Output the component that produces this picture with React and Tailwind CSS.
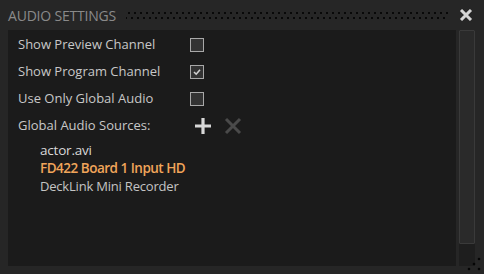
import React from "react";

function Dots() {
  return (
    <div
      className="flex-1 h-[13px] ml-[10px] mr-[10px] mt-[1px]"
      style={{
        backgroundImage:
          "radial-gradient(circle, #080808 1.1px, transparent 1.3px), radial-gradient(circle, #080808 1.1px, transparent 1.3px)",
        backgroundSize: "6px 10px, 6px 10px",
        backgroundPosition: "0px -1px, 3px 4px",
      }}
    />
  );
}

function Check({ checked }) {
  return (
    <div className="w-[14px] h-[14px] border border-[#a8a8a8] bg-[#333] flex items-center justify-center">
      {checked && (
        <svg width="10" height="10" viewBox="0 0 10 10">
          <path d="M2 5 L4.2 7.2 L8 2.8" stroke="#d0d0d0" strokeWidth="1.6" fill="none" />
        </svg>
      )}
    </div>
  );
}

function Row({ label, checked }) {
  return (
    <div className="flex items-center h-[27px]">
      <span className="w-[172px]">{label}</span>
      <Check checked={checked} />
    </div>
  );
}

export default function App() {
  return (
    <div
      className="relative w-[484px] h-[274px] bg-[#262626] flex flex-col text-[13px]"
      style={{ fontFamily: '"Open Sans", "Noto Sans", sans-serif' }}
    >
      <div className="h-[30px] flex items-center pl-[8px] pr-[11px]">
        <span className="text-[#8a8a8a] text-[14px] tracking-[-0.2px]">AUDIO SETTINGS</span>
        <Dots />
        <svg width="14" height="12" viewBox="0 0 14 12">
          <path d="M2 1 L12 11 M12 1 L2 11" stroke="#d4d4d4" strokeWidth="3" />
        </svg>
      </div>
      <div className="flex-1 flex pl-[8px] pr-[9px] pb-[8px] gap-[3px]">
        <div className="flex-1 bg-[#1b1b1b] pl-[10px] pt-[1px] text-[#c8c8c8]">
          <Row label="Show Preview Channel" />
          <Row label="Show Program Channel" checked />
          <Row label="Use Only Global Audio" />
          <div className="flex items-center h-[27px]">
            <span className="w-[176px]">Global Audio Sources:</span>
            <svg width="18" height="18" viewBox="0 0 18 18">
              <path d="M9 1 V17 M1 9 H17" stroke="#d8d8d8" strokeWidth="3.2" />
            </svg>
            <svg width="18" height="18" viewBox="0 0 18 18" className="ml-[12px]">
              <path d="M2 2 L16 16 M16 2 L2 16" stroke="#4a4a4a" strokeWidth="3" />
            </svg>
          </div>
          <div className="pl-[22px] pt-[2px] flex flex-col">
            <span className="h-[18px] leading-[18px] text-[#d8d8d8] text-[13.5px] tracking-[-0.2px]">actor.avi</span>
            <span className="h-[18px] leading-[18px] text-[#f0a55a] text-[13.5px] font-semibold tracking-[-0.5px]">FD422 Board 1 Input HD</span>
            <span className="h-[18px] leading-[18px] text-[#c4c4c4] tracking-[-0.2px]">DeckLink Mini Recorder</span>
          </div>
        </div>
        <div className="w-[16px] bg-[#1e1e1e] flex flex-col">
          <div className="h-[214px] bg-[#2a2a2a] border border-[#3a3a3a] rounded-[1px]" />
        </div>
      </div>
      <svg className="absolute right-0 bottom-0" width="20" height="20" viewBox="464 254 20 20">
        <circle cx="479" cy="259" r="1.3" fill="#050505" />
        <circle cx="474" cy="264" r="1.3" fill="#050505" />
        <circle cx="469" cy="269" r="1.3" fill="#050505" />
        <circle cx="479" cy="269" r="1.3" fill="#050505" />
      </svg>
    </div>
  );
}
